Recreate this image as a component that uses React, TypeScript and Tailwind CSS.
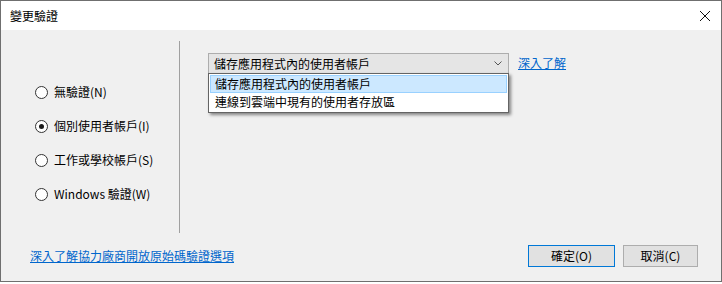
const font = "font-['Microsoft_JhengHei_UI','Noto_Sans_CJK_TC',sans-serif]";

const options = [
  { label: "無驗證(N)", checked: false },
  { label: "個別使用者帳戶(I)", checked: true },
  { label: "工作或學校帳戶(S)", checked: false },
  { label: "Windows 驗證(W)", checked: false },
];

function Radio({ label, checked }: { label: string; checked: boolean }) {
  return (
    <div className="flex items-center h-[20px]">
      <span className="w-[13px] h-[13px] rounded-full border border-[#333] bg-white flex items-center justify-center">
        {checked && <span className="w-[5px] h-[5px] rounded-full bg-[#1a1a1a]" />}
      </span>
      <span className="ml-[6px] text-[12px] text-black leading-none">{label}</span>
    </div>
  );
}

export default function App() {
  return (
    <div className={`w-[722px] h-[284px] bg-white ${font}`}>
      <div className="w-[722px] h-[282px] border border-[#6f6f6f] flex flex-col bg-[#f0f0f0]">
        {/* title bar */}
        <div className="h-[29px] bg-white flex items-center justify-between pl-[9px] pr-[9px]">
          <span className="text-[12px] text-black">變更驗證</span>
          <svg width="12" height="12" viewBox="0 0 12 12" className="mr-[1px]">
            <path d="M1 1L11 11M11 1L1 11" stroke="#111" strokeWidth="1" />
          </svg>
        </div>

        {/* body */}
        <div className="flex pt-[11px] h-[203px]">
          <div className="w-[179px] border-r border-[#a0a0a0] flex flex-col gap-[14px] pl-[34px] pt-[41px]">
            {options.map((o) => (
              <Radio key={o.label} label={o.label} checked={o.checked} />
            ))}
          </div>
          <div className="flex items-start pl-[28px] pt-[12px]">
            <div className="relative">
              <div className="w-[301px] h-[21px] border border-[#adadad] bg-[#e5e5e5] flex items-center justify-between pl-[5px] pr-[6px]">
                <span className="text-[12px] text-black leading-none">儲存應用程式內的使用者帳戶</span>
                <svg width="8" height="5" viewBox="0 0 8 5">
                  <path d="M0.5 0.5L4 4L7.5 0.5" fill="none" stroke="#555" strokeWidth="1" />
                </svg>
              </div>
              <div className="absolute left-0 top-[20px] w-[301px] border border-[#646464] bg-white p-[1px] shadow-[2px_2px_3px_rgba(0,0,0,0.45)]">
                <div className="h-[18px] bg-[#cce8ff] border border-[#99d1ff] flex items-center pl-[4px] text-[12px] text-black leading-none">
                  儲存應用程式內的使用者帳戶
                </div>
                <div className="h-[18px] flex items-center pl-[5px] text-[12px] text-black leading-none">
                  連線到雲端中現有的使用者存放區
                </div>
              </div>
            </div>
            <a className="ml-[9px] mt-[2px] text-[12px] text-[#0066cc] underline leading-[16px]">深入了解</a>
          </div>
        </div>

        {/* footer */}
        <div className="flex items-center justify-between pl-[29px] pr-[23px] pt-[12px]">
          <a className="text-[12px] text-[#0066cc] underline leading-[16px]">深入了解協力廠商開放原始碼驗證選項</a>
          <div className="flex gap-[8px]">
            <button className="w-[87px] h-[22px] border border-[#0078d7] bg-[#e1e1e1] text-[12px] text-black leading-none">
              確定(O)
            </button>
            <button className="w-[75px] h-[22px] border border-[#adadad] bg-[#e1e1e1] text-[12px] text-black leading-none">
              取消(C)
            </button>
          </div>
        </div>
      </div>
    </div>
  );
}
